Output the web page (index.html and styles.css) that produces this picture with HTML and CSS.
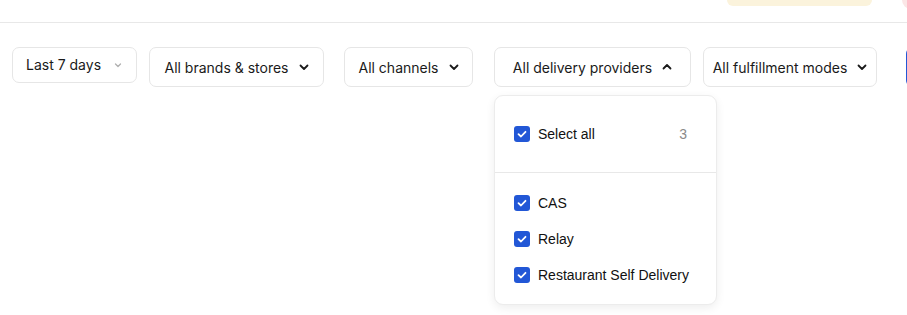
FILE: index.html
```html
<!DOCTYPE html>
<html>
<head>
<meta charset="utf-8">
<link rel="stylesheet" href="styles.css">
</head>
<body>
<header class="topbar">
  <div class="banner"></div>
  <div class="avatar"></div>
</header>
<div class="filters">
  <button class="btn btn-small">Last 7 days
    <svg class="chev light" width="10" height="10" viewBox="0 0 10 10"><path d="M2.5 4 L5 6.5 L7.5 4" fill="none" stroke="#b0b0b0" stroke-width="1.3" stroke-linecap="round" stroke-linejoin="round"/></svg>
  </button>
  <button class="btn w-brands">All brands &amp; stores
    <svg class="chev" width="10" height="10" viewBox="0 0 10 10"><path d="M1.5 3.5 L5 7 L8.5 3.5" fill="none" stroke="#1a1a1a" stroke-width="1.8" stroke-linecap="round" stroke-linejoin="round"/></svg>
  </button>
  <button class="btn w-channels">All channels
    <svg class="chev" width="10" height="10" viewBox="0 0 10 10"><path d="M1.5 3.5 L5 7 L8.5 3.5" fill="none" stroke="#1a1a1a" stroke-width="1.8" stroke-linecap="round" stroke-linejoin="round"/></svg>
  </button>
  <div class="dd-wrap">
    <button class="btn w-delivery">All delivery providers
      <svg class="chev" width="10" height="10" viewBox="0 0 10 10"><path d="M1.5 6.5 L5 3 L8.5 6.5" fill="none" stroke="#1a1a1a" stroke-width="1.8" stroke-linecap="round" stroke-linejoin="round"/></svg>
    </button>
    <div class="menu">
      <div class="menu-section top">
        <label class="opt"><span class="cb"><svg width="16" height="16" viewBox="0 0 16 16"><path d="M4.5 8.2 L7 10.5 L11.5 5.8" fill="none" stroke="#fff" stroke-width="1.8" stroke-linecap="round" stroke-linejoin="round"/></svg></span><span class="lbl">Select all</span><span class="count">3</span></label>
      </div>
      <div class="menu-section list">
        <label class="opt"><span class="cb"><svg width="16" height="16" viewBox="0 0 16 16"><path d="M4.5 8.2 L7 10.5 L11.5 5.8" fill="none" stroke="#fff" stroke-width="1.8" stroke-linecap="round" stroke-linejoin="round"/></svg></span><span class="lbl">CAS</span></label>
        <label class="opt"><span class="cb"><svg width="16" height="16" viewBox="0 0 16 16"><path d="M4.5 8.2 L7 10.5 L11.5 5.8" fill="none" stroke="#fff" stroke-width="1.8" stroke-linecap="round" stroke-linejoin="round"/></svg></span><span class="lbl">Relay</span></label>
        <label class="opt"><span class="cb"><svg width="16" height="16" viewBox="0 0 16 16"><path d="M4.5 8.2 L7 10.5 L11.5 5.8" fill="none" stroke="#fff" stroke-width="1.8" stroke-linecap="round" stroke-linejoin="round"/></svg></span><span class="lbl">Restaurant Self Delivery</span></label>
      </div>
    </div>
  </div>
  <button class="btn w-fulfill">All fulfillment modes
    <svg class="chev" width="10" height="10" viewBox="0 0 10 10"><path d="M1.5 3.5 L5 7 L8.5 3.5" fill="none" stroke="#1a1a1a" stroke-width="1.8" stroke-linecap="round" stroke-linejoin="round"/></svg>
  </button>
  <div class="primary"></div>
</div>
</body>
</html>
```
FILE: styles.css
```css
* { box-sizing: border-box; }
html, body { margin: 0; padding: 0; background: #fff; overflow: hidden; }
body {
  width: 907px;
  height: 315px;
  font-family: Inter, "Liberation Sans", sans-serif;
  color: #1a1a1a;
}
.topbar {
  height: 23px;
  border-bottom: 1px solid #e8e8e8;
  display: flex;
  align-items: flex-start;
  justify-content: flex-end;
}
.banner {
  flex: none;
  width: 145px;
  height: 6px;
  background: #fbf3dc;
  border-radius: 0 0 8px 8px;
  margin-right: 30px;
}
.avatar {
  flex: none;
  width: 10px;
  height: 9px;
  background: #fbe6e6;
  border-radius: 0 0 0 10px;
  margin-right: -5px;
}
.filters {
  display: flex;
  align-items: flex-start;
  padding: 24px 0 0 12px;
  width: 907px;
}
.filters > * { flex: none; }
.btn {
  font-family: Inter, sans-serif;
  font-size: 14px;
  color: #1a1a1a;
  background: #fff;
  border: 1px solid #e6e6e6;
  border-radius: 7px;
  height: 40px;
  display: flex;
  align-items: center;
  justify-content: center;
  gap: 10px;
  padding: 0;
  flex: none;
}
.btn-small {
  width: 125px;
  height: 36px;
  gap: 12px;
  padding-bottom: 1px;
}
.w-brands { width: 175px; margin-left: 12px; }
.w-channels { width: 129px; margin-left: 20px; }
.dd-wrap { position: relative; margin-left: 21px; }
.w-delivery { width: 197px; }
.w-fulfill { width: 174px; margin-left: 12px; }
.chev { display: block; flex: none; }
.primary {
  width: 40px;
  height: 40px;
  margin-left: 29px;
  background: #2257d6;
  border-radius: 7px 0 0 7px;
}
.menu {
  position: absolute;
  left: 0;
  top: 48px;
  width: 223px;
  height: 210px;
  background: #fff;
  border: 1px solid #ececec;
  border-radius: 9px;
  box-shadow: 0 3px 10px rgba(0, 0, 0, 0.07);
  font-family: "Liberation Sans", Arial, sans-serif;
  font-size: 14px;
  color: #111;
}
.menu-section { padding: 0 19px; }
.menu-section.top {
  padding-top: 29px;
  padding-bottom: 29px;
  border-bottom: 1px solid #e8e8e8;
}
.menu-section.list {
  padding-top: 21px;
  display: flex;
  flex-direction: column;
  gap: 18px;
}
.opt {
  display: flex;
  align-items: center;
  height: 18px;
  gap: 8px;
}
.cb {
  width: 16px;
  height: 16px;
  border-radius: 3px;
  background: #2257d6;
  display: block;
  flex: none;
}
.cb svg { display: block; }
.lbl { flex: 1; }
.count { color: #8a8a8a; margin-right: 10px; }
```
